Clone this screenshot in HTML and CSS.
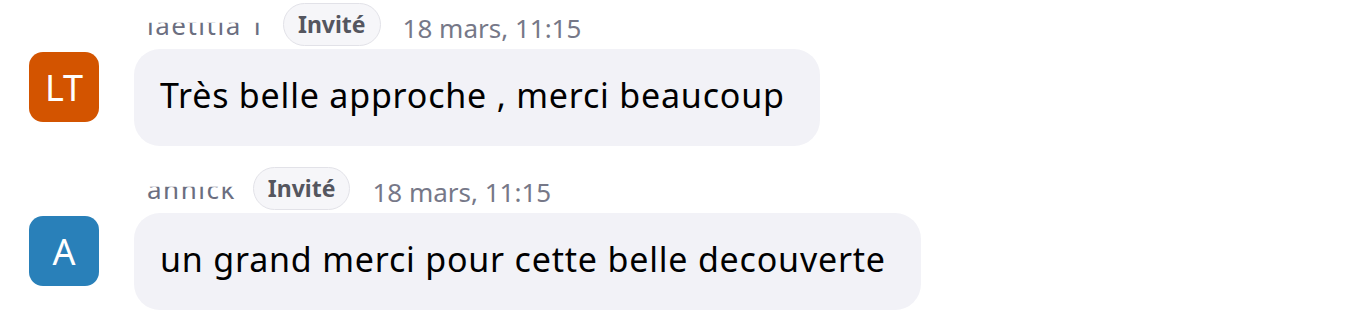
FILE: index.html
```html
<!DOCTYPE html>
<html>
<head>
	<title>Messages</title>
	<meta charset="utf-8">
	<link rel="stylesheet" href="styles.css">
</head>
<body>
  <div class="chat">
    <div class="msg">
      <div class="msg-head">
        <span class="name">laetitia T</span>
        <span class="badge">Invité</span>
        <span class="time">18 mars, 11:15</span>
      </div>
      <div class="avatar orange">LT</div>
      <div class="bubble">Très belle approche , merci beaucoup</div>
    </div>
    <div class="msg">
      <div class="msg-head">
        <span class="name">annick</span>
        <span class="badge">Invité</span>
        <span class="time">18 mars, 11:15</span>
      </div>
      <div class="avatar blue">A</div>
      <div class="bubble">un grand merci pour cette belle decouverte</div>
    </div>
  </div>
</body>
</html>
```

FILE: styles.css
```css
body{
	margin: 0;
	background: #fff;
	font-family: "Noto Sans", "Liberation Sans", sans-serif;
}
.chat{
	padding: 3px 0 0 29px;
}
.msg{
	display: grid;
	grid-template-columns: 70px auto;
	column-gap: 35px;
	justify-content: start;
	margin-bottom: 21px;
}
.msg-head{
	grid-column: 2;
	display: flex;
	align-items: center;
	height: 43px;
	padding-left: 13px;
	margin-bottom: 3px;
}
.name{
	font-size: 26px;
	letter-spacing: 1.5px;
	color: #6b6e80;
	clip-path: inset(45% 0 0 0);
	margin-right: 17px;
}
.badge{
	box-sizing: border-box;
	height: 43px;
	padding: 0 14px;
	border: 1px solid #e2e2e8;
	border-radius: 22px;
	background: #f6f6f9;
	color: #55565f;
	font-size: 23px;
	font-weight: bold;
	line-height: 41px;
}
.time{
	margin-left: 22px;
	font-size: 26px;
	color: #767888;
	padding-top: 6px;
}
.avatar{
	grid-column: 1;
	grid-row: 2;
	width: 70px;
	height: 70px;
	margin-top: 3px;
	border-radius: 14px;
	color: #fff;
	font-size: 36px;
	display: flex;
	align-items: center;
	justify-content: center;
}
.orange{
	background: #d35400;
}
.blue{
	background: #2980b9;
}
.bubble{
	grid-column: 2;
	grid-row: 2;
	justify-self: start;
	padding: 22px 35px 27px 26px;
	border-radius: 26px;
	background: #f2f2f7;
	color: #000;
	font-size: 34px;
	letter-spacing: 0.8px;
	line-height: 48px;
}
```
